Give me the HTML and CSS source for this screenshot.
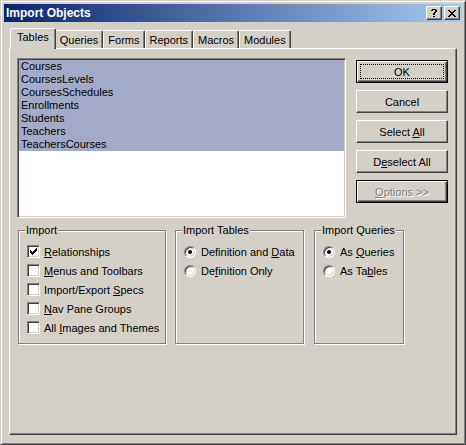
FILE: index.html
```html
<!DOCTYPE html>
<html lang="en">
<head>
    <meta charset="UTF-8">
    <title>Import Objects</title>
    <link rel="stylesheet" href="styles.css">
</head>
<body>
    <div class="window">
        <div class="titlebar">
            <span class="title">Import Objects</span>
            <div class="caption-buttons">
                <button class="caption-btn" aria-label="Help">
                    <svg width="6" height="8" viewBox="0 0 6 8"><path d="M1 0h4v1h-4z M0 1h2v1h-2z M4 1h2v1h-2z M4 2h2v1h-2z M3 3h2v1h-2z M2 4h2v2h-2z M2 7h2v1h-2z"/></svg>
                </button>
                <button class="caption-btn" aria-label="Close">
                    <svg width="8" height="7" viewBox="0 0 8 7"><path d="M0 0h2v1h-2z M6 0h2v1h-2z M1 1h2v1h-2z M5 1h2v1h-2z M2 2h4v1h-4z M3 3h2v1h-2z M2 4h4v1h-4z M1 5h2v1h-2z M5 5h2v1h-2z M0 6h2v1h-2z M6 6h2v1h-2z"/></svg>
                </button>
            </div>
        </div>

        <div class="tabs">
            <div class="tab active">Tables</div>
            <div class="tab">Queries</div>
            <div class="tab">Forms</div>
            <div class="tab">Reports</div>
            <div class="tab">Macros</div>
            <div class="tab">Modules</div>
        </div>

        <div class="panel">
            <div class="top-row">
                <ul class="listbox">
                    <li class="selected">Courses</li>
                    <li class="selected">CoursesLevels</li>
                    <li class="selected">CoursesSchedules</li>
                    <li class="selected">Enrollments</li>
                    <li class="selected">Students</li>
                    <li class="selected">Teachers</li>
                    <li class="selected">TeachersCourses</li>
                </ul>
                <div class="actions">
                    <button class="btn default focused">OK</button>
                    <button class="btn">Cancel</button>
                    <button class="btn">Select <u>A</u>ll</button>
                    <button class="btn">D<u>e</u>select All</button>
                    <button class="btn default" disabled><u>O</u>ptions &gt;&gt;</button>
                </div>
            </div>

            <div class="groups">
                <fieldset class="group group-import">
                    <legend>Import</legend>
                    <label class="row"><span class="check checked"><svg width="7" height="7" viewBox="0 0 7 7"><path d="M6 0h1v1h-1z M5 1h2v1h-2z M0 2h1v1h-1z M4 2h3v1h-3z M0 3h2v1h-2z M3 3h3v1h-3z M0 4h5v1h-5z M1 5h3v1h-3z M2 6h1v1h-1z"/></svg></span><span><u>R</u>elationships</span></label>
                    <label class="row"><span class="check"></span><span><u>M</u>enus and Toolbars</span></label>
                    <label class="row"><span class="check"></span><span>Import/Export <u>S</u>pecs</span></label>
                    <label class="row"><span class="check"></span><span><u>N</u>av Pane Groups</span></label>
                    <label class="row"><span class="check"></span><span>All <u>I</u>mages and Themes</span></label>
                </fieldset>
                <fieldset class="group group-tables">
                    <legend>Import Tables</legend>
                    <label class="row"><span class="radio on"></span><span>Definition and <u>D</u>ata</span></label>
                    <label class="row"><span class="radio"></span><span>De<u>f</u>inition Only</span></label>
                </fieldset>
                <fieldset class="group group-queries">
                    <legend>Import Queries</legend>
                    <label class="row"><span class="radio on"></span><span>As <u>Q</u>ueries</span></label>
                    <label class="row"><span class="radio"></span><span>As Ta<u>b</u>les</span></label>
                </fieldset>
            </div>
        </div>
    </div>
</body>
</html>
```

FILE: styles.css
```css
/* base */
* {
    box-sizing: border-box;
}

html, body {
    margin: 0;
    padding: 0;
}

body {
    background-color: #d4d0c8;
    font-family: "Liberation Sans", Arial, sans-serif;
    font-size: 11px;
    color: #000;
}

u {
    text-decoration: underline;
    text-underline-offset: 1px;
}

/* window frame */
.window {
    width: 466px;
    height: 445px;
    padding: 3px;
    background-color: #d4d0c8;
    border: 1px solid;
    border-color: #d4d0c8 #404040 #404040 #d4d0c8;
    box-shadow: inset 1px 1px 0 #fff, inset -1px -1px 0 #808080;
}

/* title bar */
.titlebar {
    height: 18px;
    display: flex;
    align-items: center;
    justify-content: space-between;
    padding-left: 2px;
    padding-right: 2px;
    background: linear-gradient(to right, #0a246a, #a6caf0);
}

.title {
    color: #fff;
    font-weight: bold;
    font-size: 12px;
    line-height: 18px;
}

.caption-buttons {
    display: flex;
    gap: 2px;
}

.caption-btn {
    width: 16px;
    height: 14px;
    padding: 0;
    display: flex;
    align-items: center;
    justify-content: center;
    background-color: #d4d0c8;
    border: 1px solid;
    border-color: #fff #404040 #404040 #fff;
    box-shadow: inset -1px -1px 0 #808080;
}

.caption-btn svg {
    display: block;
    fill: #000;
    shape-rendering: crispEdges;
}

/* tabs */
.tabs {
    height: 20px;
    margin: 6px 5px 0;
    display: flex;
    align-items: flex-end;
}

.tab {
    height: 18px;
    padding: 3px 4px 0;
    line-height: 13px;
    background-color: #d4d0c8;
    border-top: 1px solid #fff;
    border-left: 1px solid #fff;
    border-right: 1px solid #404040;
    border-top-left-radius: 2px;
    border-top-right-radius: 2px;
    box-shadow: inset -1px 0 0 #808080;
}

.tab.active {
    position: relative;
    z-index: 1;
    height: 21px;
    margin-left: 1px;
    margin-right: -1px;
    margin-bottom: -1px;
    padding: 2px 6px 0;
}

/* tab page */
.panel {
    height: 387px;
    margin: 0 5px;
    padding: 9px 8px 0 7px;
    border-top: 1px solid #fff;
    border-left: 1px solid #fff;
    border-right: 1px solid #404040;
    border-bottom: 1px solid #404040;
    box-shadow: inset -1px -1px 0 #808080;
}

.top-row {
    display: flex;
    justify-content: space-between;
}

/* list of tables */
.listbox {
    width: 329px;
    height: 160px;
    margin: 0;
    list-style: none;
    background-color: #fff;
    border: 1px solid;
    border-color: #808080 #fff #fff #808080;
    box-shadow: inset 1px 1px 0 #404040, inset -1px -1px 0 #d4d0c8;
    padding: 1px;
}

.listbox li {
    height: 13px;
    line-height: 13px;
    padding-left: 2px;
    white-space: nowrap;
}

.listbox li.selected {
    background-color: #a4abc8;
}

/* push buttons */
.actions {
    display: flex;
    flex-direction: column;
    gap: 7px;
    margin-top: 2px;
}

.btn {
    position: relative;
    width: 92px;
    height: 23px;
    padding: 0;
    font-family: inherit;
    font-size: 11px;
    color: #000;
    background-color: #d4d0c8;
    border: 1px solid;
    border-color: #fff #404040 #404040 #fff;
    box-shadow: inset -1px -1px 0 #808080;
}

.btn.default {
    border-color: #000;
    box-shadow: inset 1px 1px 0 #fff, inset -1px -1px 0 #404040, inset -2px -2px 0 #808080;
}

.btn.focused::after {
    content: "";
    position: absolute;
    top: 3px;
    left: 3px;
    right: 3px;
    bottom: 3px;
    border: 1px dotted #000;
}

.btn:disabled {
    color: #808080;
    text-shadow: 1px 1px 0 #fff;
}

/* option groups */
.groups {
    display: flex;
    gap: 9px;
    margin-top: 6px;
    padding-left: 1px;
}

.group {
    flex: none;
    min-width: 0;
    height: 120px;
    margin: 0;
    padding: 5px 8px 0;
    border: 1px solid #808080;
    box-shadow: inset 1px 1px 0 #fff, 1px 1px 0 #fff;
}

.group legend {
    padding: 0 1px;
    margin-left: -2px;
    line-height: 13px;
    white-space: nowrap;
    background-color: #d4d0c8;
}

.group-import { width: 148px; }
.group-tables { width: 129px; }
.group-queries { width: 90px; margin-left: 1px; }

.row {
    height: 19px;
    display: flex;
    align-items: center;
    white-space: nowrap;
}

.check {
    flex: none;
    width: 13px;
    height: 13px;
    margin-right: 4px;
    background-color: #fff;
    border: 1px solid;
    border-color: #808080 #fff #fff #808080;
    box-shadow: inset 1px 1px 0 #404040, inset -1px -1px 0 #d4d0c8;
}

.check svg {
    display: block;
    margin: 2px;
    fill: #000;
    shape-rendering: crispEdges;
}

.radio {
    flex: none;
    position: relative;
    width: 12px;
    height: 12px;
    margin-right: 5px;
    border-radius: 50%;
    background-color: #fff;
    border: 1px solid;
    border-color: #808080 #fff #fff #808080;
    box-shadow: inset 1px 1px 0 #404040, inset -1px -1px 0 #d4d0c8;
}

.radio.on::after {
    content: "";
    position: absolute;
    top: 3px;
    left: 3px;
    width: 4px;
    height: 4px;
    border-radius: 50%;
    background-color: #000;
}
```
